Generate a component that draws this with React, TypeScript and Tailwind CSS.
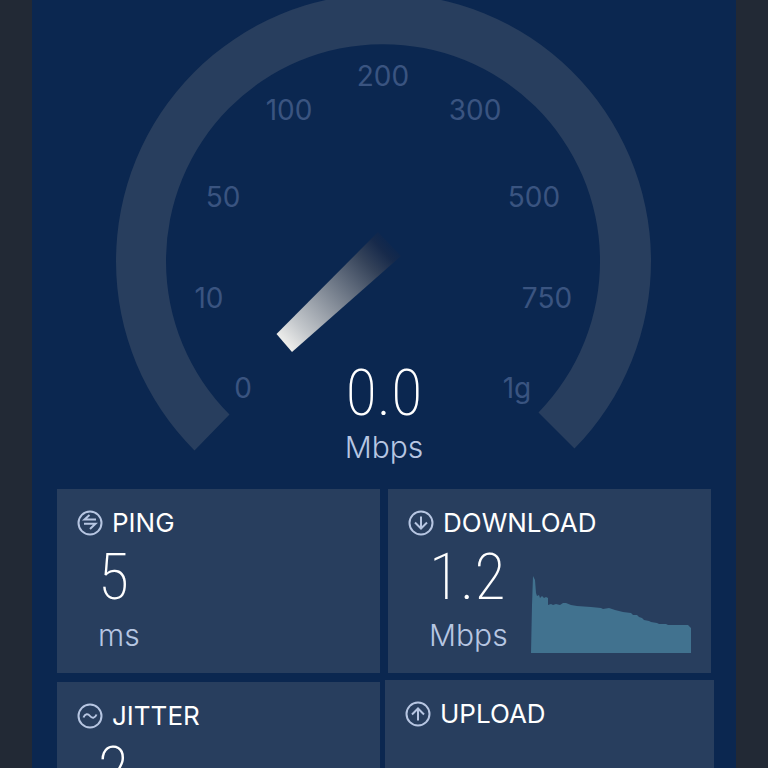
import type { ReactNode } from 'react'

type MetricCardProps = {
  title: string
  icon: ReactNode
  value?: string
  unit?: string
  active?: boolean
  children?: ReactNode
}

const scale = [
  { label: '0', x: 211, y: 398 },
  { label: '10', x: 177, y: 308 },
  { label: '50', x: 191, y: 207 },
  { label: '100', x: 257, y: 120 },
  { label: '200', x: 351, y: 86 },
  { label: '300', x: 443, y: 120 },
  { label: '500', x: 502, y: 207 },
  { label: '750', x: 515, y: 308 },
  { label: '1g', x: 485, y: 398 },
]

function RoundIcon({ children }: { children: ReactNode }) {
  return (
    <svg
      className="h-[26px] w-[26px] shrink-0 text-[#b7c6e2]"
      viewBox="0 0 26 26"
      fill="none"
      stroke="currentColor"
      strokeWidth="2"
      aria-hidden="true"
    >
      <circle cx="13" cy="13" r="11.5" />
      {children}
    </svg>
  )
}

function Gauge() {
  return (
    <svg className="block w-full" viewBox="0 0 704 489" role="img" aria-label="Speed gauge">
      <defs>
        <linearGradient id="needle" gradientUnits="userSpaceOnUse" x1="252" y1="343" x2="364" y2="238">
          <stop offset="0" stopColor="#eeeeec" />
          <stop offset="0.15" stopColor="#c3c7cb" />
          <stop offset="0.45" stopColor="#7b8491" />
          <stop offset="0.75" stopColor="#344259" />
          <stop offset="0.88" stopColor="#172a4b" />
          <stop offset="1" stopColor="#10254a" stopOpacity="0" />
        </linearGradient>
      </defs>

      {/* Track */}
      <path
        d="M162.5 450.5 A267.5 267.5 0 1 1 542.5 448.5 L506.5 412.5 A217 217 0 1 0 197.5 414.5 Z"
        fill="#283e5e"
      />

      {/* Needle */}
      <path d="M244.5 334 L346 232 L369 256 L260 352 Z" fill="url(#needle)" />

      <g className="fill-[#3a5480] font-['Inter',sans-serif] text-[28px]" textAnchor="middle">
        {scale.map(({ label, x, y }) => (
          <text key={label} x={x} y={y}>
            {label}
          </text>
        ))}
      </g>

      <text
        x="352"
        y="415"
        textAnchor="middle"
        className="fill-white font-['Roboto_Condensed',Roboto,sans-serif] text-[64px] font-extralight"
      >
        0.0
      </text>
      <text
        x="352"
        y="458"
        textAnchor="middle"
        className="fill-[#b7c6e2] font-['Inter',sans-serif] text-[30px] font-light"
      >
        Mbps
      </text>
    </svg>
  )
}

function SpeedChart() {
  return (
    <svg className="h-[78px] w-40 fill-[#41728f]" viewBox="0 0 160 78" aria-hidden="true">
      <path d="M0 78 L1 30 L2 1 L4 5 L5 18 L6 21 L8 20 L9 23 L11 21 L13 23 L15 22 L17 23 L17 30 L20 29 L22 30 L25 29 L29 30 L32 28 L35 28 L40 30 L46 31 L60 32 L70 33 L72 34 L78 33 L84 35 L92 37 L100 38 L102 40 L106 40 L108 42 L111 43 L113 45 L118 46 L120 47 L126 48 L128 49 L135 49 L137 50 L157 50 L160 53 L160 78 Z" />
    </svg>
  )
}

function MetricCard({ title, icon, value, unit, active, children }: MetricCardProps) {
  return (
    <section
      className={
        active
          ? '-mx-[3px] -mt-0.5 flex min-h-[188px] flex-col bg-[#283e5e] px-5 pt-[18px]'
          : 'flex min-h-[184px] flex-col bg-[#283e5e] px-5 pt-[18px]'
      }
    >
      <h2 className="flex items-center gap-[9px] font-['Inter',sans-serif] text-[26px] leading-8 text-white">
        {icon}
        {title}
      </h2>
      <div className="flex items-start justify-between">
        <div className="pl-[21px]">
          {value && (
            <p className="font-['Roboto_Condensed',Roboto,sans-serif] text-[64px] leading-[78px] font-extralight text-white">
              {value}
            </p>
          )}
          {unit && (
            <p className="font-['Inter',sans-serif] text-[30px] leading-9 font-light text-[#b7c6e2]">{unit}</p>
          )}
        </div>
        {children && <div className="pt-9">{children}</div>}
      </div>
    </section>
  )
}

export default function App() {
  return (
    <div className="h-screen overflow-hidden bg-[#222935] px-8">
      <main className="min-h-full bg-[#0b2750]">
        <Gauge />
        <div className="grid grid-cols-2 gap-x-2 gap-y-[9px] px-[25px]">
          <MetricCard
            title="PING"
            value="5"
            unit="ms"
            icon={
              <RoundIcon>
                <path d="M12.5 5 L7.5 9.5 H19 M7 13.7 H18.5 L13 19" />
              </RoundIcon>
            }
          />
          <MetricCard
            title="DOWNLOAD"
            value="1.2"
            unit="Mbps"
            icon={
              <RoundIcon>
                <path d="M13 6.5 V18.5 M7 12.5 L13 18.5 L19 12.5" />
              </RoundIcon>
            }
          >
            <SpeedChart />
          </MetricCard>
          <MetricCard
            title="JITTER"
            value="2"
            unit="ms"
            icon={
              <RoundIcon>
                <path d="M6.5 14.5 C8 10.5 11 10.5 13 13 S18 15.5 19.5 11.5" />
              </RoundIcon>
            }
          />
          <MetricCard
            title="UPLOAD"
            active
            icon={
              <RoundIcon>
                <path d="M13 19.5 V7.5 M7 13.5 L13 7.5 L19 13.5" />
              </RoundIcon>
            }
          />
        </div>
      </main>
    </div>
  )
}
